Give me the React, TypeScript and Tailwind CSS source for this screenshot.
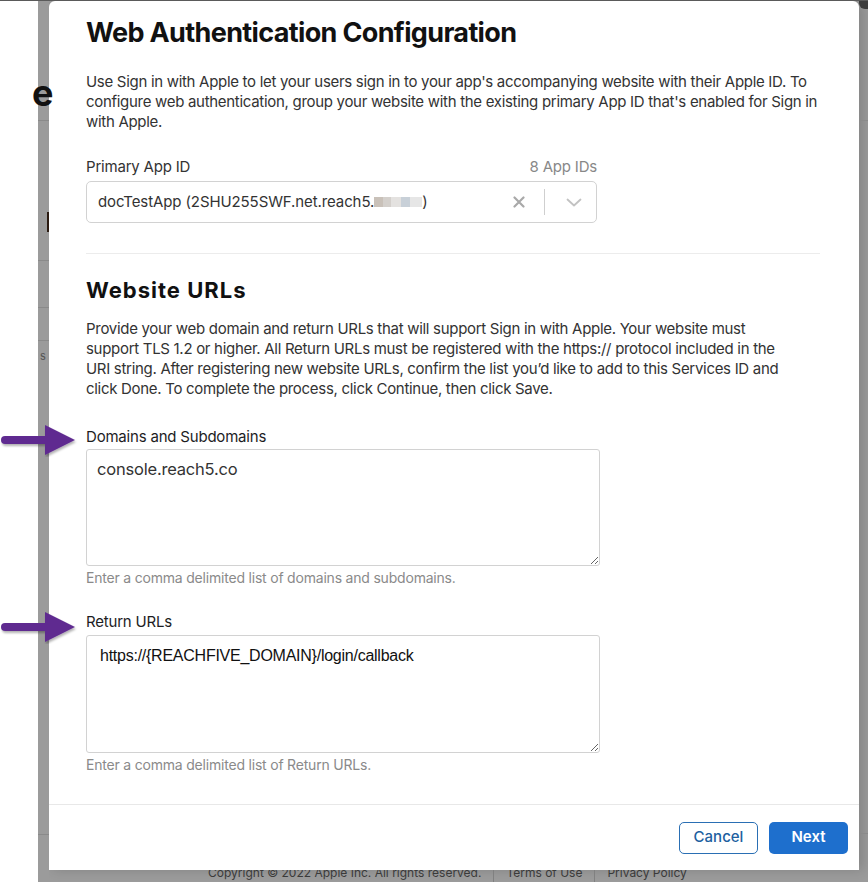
const SANS = "font-['Inter','Liberation_Sans',sans-serif]";

function Arrow({ className }: { className: string }) {
  return (
    <svg className={className} width="80" height="34" viewBox="0 0 80 34">
      <defs>
        <filter id="ash" x="-10%" y="-20%" width="130%" height="150%">
          <feDropShadow dx="1" dy="2" stdDeviation="1.2" floodColor="#000" floodOpacity="0.3" />
        </filter>
      </defs>
      <g filter="url(#ash)" fill="#5f2b90">
        <path d="M5 13 H48 V21 H5 A4 4 0 0 1 5 13 Z" />
        <path d="M45 2 L75 17 L45 32 Z" />
      </g>
    </svg>
  );
}

function Field({ label, value, help, mono }: { label: string; value: string; help: string; mono?: boolean }) {
  return (
    <div className="flex flex-col">
      <label className="text-[15px] leading-[20px] tracking-[-0.2px] text-[#1d1d1f]">{label}</label>
      <textarea
        readOnly
        defaultValue={value}
        className={
          mono
            ? "mt-[3px] h-[118px] w-[514px] rounded-[3px] border border-[#d2d2d2] px-[13px] pt-[10px] font-['Liberation_Sans',Arial,sans-serif] text-[16px] leading-[20px] tracking-[-0.25px] text-[#111] outline-none"
            : "mt-[2px] h-[117px] w-[514px] rounded-[3px] border border-[#d2d2d2] px-[10px] pt-[8px] text-[16.5px] leading-[22px] tracking-[-0.2px] text-[#333] outline-none"
        }
      />
      <p className="mt-[2px] text-[14px] leading-[20px] tracking-[-0.2px] text-[#8a8a8a]">{help}</p>
    </div>
  );
}

export default function App() {
  return (
    <div className={`relative flex h-[882px] w-[868px] overflow-hidden border-t border-[#5a5a5a] bg-[#9b9b9b] ${SANS}`}>
      {/* page behind the sheet */}
      <div className="relative flex h-full w-[49px] shrink-0">
        <div className="h-full w-[38px] bg-white" />
        <div className="flex h-full w-[11px] flex-col bg-[#9b9b9b]">
          <div className="mt-[119px] h-px bg-[#8a8a8a]" />
          <div className="ml-[9px] mt-[91px] h-[20px] w-[2px] bg-[#2a1a10]" />
          <div className="mt-[28px] h-px bg-[#8a8a8a]" />
          <div className="mt-[46px] h-px bg-[#8a8a8a]" />
          <div className="mt-[32px] h-px bg-[#8a8a8a]" />
          <span className="ml-[2px] mt-[9px] text-[11px] leading-[12px] text-[#555]">s</span>
          <div className="mt-[472px] h-px bg-[#8a8a8a]" />
        </div>
        <span className="absolute left-[32px] top-[74px] text-[36px] font-bold leading-[36px] text-[#111]">e</span>
      </div>

      {/* modal */}
      <div className="flex w-[810px] shrink-0 flex-col">
        <div className="flex h-[870px] flex-col rounded-t-[6px] bg-white shadow-[4px_0_12px_rgba(0,0,0,0.15)]">
          <div className="flex flex-1 flex-col pl-[37px] pr-[39px]">
            <h1 className="pt-[16px] text-[27px] font-bold leading-[32px] tracking-[-0.65px] text-[#111]">
              Web Authentication Configuration
            </h1>
            <p className="mt-[23px] whitespace-nowrap text-[15px] leading-[20px] tracking-[-0.3px] text-[#333]">
              Use Sign in with Apple to let your users sign in to your app's accompanying website with their Apple ID. To
              <br />
              configure web authentication, group your website with the existing primary App ID that's enabled for Sign in
              <br />
              with Apple.
            </p>

            <div className="mt-[25px] flex w-[511px] items-end justify-between text-[15px] leading-[20px] tracking-[-0.2px]">
              <span className="text-[#333]">Primary App ID</span>
              <span className="text-[#888]">8 App IDs</span>
            </div>
            <div className="mt-[4px] flex h-[42px] w-[511px] items-center rounded-[5px] border border-[#d2d2d2] pl-[11px] pr-[14px]">
              <span className="flex flex-1 items-center text-[15px] tracking-[-0.1px] text-[#333]">
                docTestApp (2SHU255SWF.net.reach5.
                <span className="flex h-[10px]">
                  <span className="w-[9px] bg-[#c9c1b9]" />
                  <span className="w-[8px] bg-[#d4d0cc]" />
                  <span className="w-[10px] bg-[#e4e2e0]" />
                  <span className="w-[9px] bg-[#c8d0d8]" />
                  <span className="w-[12px] bg-[#e6e6e6]" />
                </span>
                )
              </span>
              <svg width="12" height="12" viewBox="0 0 12 12" className="mr-[19px]">
                <path d="M1.5 1.5 L10.5 10.5 M10.5 1.5 L1.5 10.5" stroke="#a9a9a9" strokeWidth="2.2" strokeLinecap="round" />
              </svg>
              <span className="h-[26px] w-px bg-[#cfcfcf]" />
              <svg width="16" height="9" viewBox="0 0 16 9" className="ml-[21px]">
                <path d="M1.5 1.5 L8 7.5 L14.5 1.5" fill="none" stroke="#c2c2c2" strokeWidth="1.8" strokeLinecap="round" strokeLinejoin="round" />
              </svg>
            </div>

            <div className="mt-[30px] h-px bg-[#ececec]" />

            <h2 className="mt-[22px] text-[22px] font-bold leading-[28px] tracking-[1px] text-[#111]">Website URLs</h2>
            <p className="mt-[15px] whitespace-nowrap text-[15px] leading-[20px] tracking-[-0.3px] text-[#333]">
              Provide your web domain and return URLs that will support Sign in with Apple. Your website must
              <br />
              support TLS 1.2 or higher. All Return URLs must be registered with the https:// protocol included in the
              <br />
              URI string. After registering new website URLs, confirm the list you’d like to add to this Services ID and
              <br />
              click Done. To complete the process, click Continue, then click Save.
            </p>

            <div className="mt-[28px]">
              <Field
                label="Domains and Subdomains"
                value="console.reach5.co"
                help="Enter a comma delimited list of domains and subdomains."
              />
            </div>
            <div className="mt-[24px]">
              <Field
                label="Return URLs"
                value="https://{REACHFIVE_DOMAIN}/login/callback"
                help="Enter a comma delimited list of Return URLs."
                mono
              />
            </div>
          </div>

          <div className="flex h-[66px] items-center justify-end gap-[11px] border-t border-[#e8e8e8] pr-[11px]">
            <button className="h-[32px] w-[79px] rounded-[5px] border border-[#2a6fb4] text-[15px] font-medium text-[#20609f]">
              Cancel
            </button>
            <button className="h-[32px] w-[79px] rounded-[5px] bg-[#1e6fcd] text-[15px] font-semibold text-white">
              Next
            </button>
          </div>
        </div>
        <div className="h-[12px] overflow-hidden">
          <div className="-mt-[7px] flex items-center pl-[159px] text-[12px] leading-[20px] text-[#3a3a3a]">
            <span>Copyright © 2022 Apple Inc. All rights reserved.</span>
            <span className="mx-[12px] h-[20px] w-px bg-[#808080]" />
            <span>Terms of Use</span>
            <span className="mx-[12px] h-[20px] w-px bg-[#808080]" />
            <span>Privacy Policy</span>
          </div>
        </div>
      </div>

      {/* right strip */}
      <div className="flex h-full flex-1 flex-col">
        <div className="h-[8px] rounded-bl-[6px] bg-[#3c3c3c]" />
        <div className="mt-[111px] h-px bg-[#8a8a8a]" />
        <div className="mt-[712px] h-px bg-[#8a8a8a]" />
      </div>

      <Arrow className="absolute left-0 top-[422px]" />
      <Arrow className="absolute left-0 top-[609px]" />
    </div>
  );
}
